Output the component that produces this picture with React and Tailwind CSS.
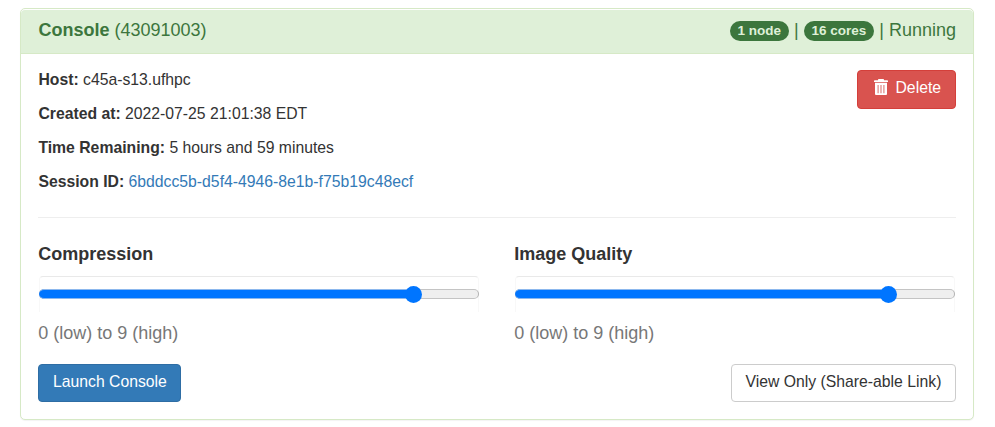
function Detail({ label, children }) {
  return (
    <p className="h-[34px] whitespace-nowrap">
      <strong>{label}</strong> {children}
    </p>
  );
}

function Badge({ children }) {
  return (
    <span className="mt-px flex h-5 items-center rounded-full bg-[#3c763d] px-[7.9px] text-[13.5px] leading-5 font-bold text-[#dff0d8]">
      {children}
    </span>
  );
}

function TrashIcon() {
  return (
    <svg width="16" height="17" viewBox="0 0 16 17" fill="none" aria-hidden="true">
      <path d="M5 1.2V.7Q5 0 5.8 0h4.4q.8 0 .8.7v.5h3.2q.8 0 .8.7V3H1V1.9q0-.7.8-.7z" fill="#fff" />
      <path d="M2 3.8h12V15q0 1-1 1H3q-1 0-1-1z" fill="#fff" />
      <path d="M5.1 6v8.3M8 6v8.3M10.9 6v8.3" stroke="#df8582" strokeWidth="1.2" />
    </svg>
  );
}

function Slider({ title, thumb }) {
  return (
    <div className="flex w-[442px] flex-col">
      <h4 className="h-[32px] pl-[0.2px] text-[18px] leading-5 font-bold">{title}</h4>
      <div className="mx-px h-[36px] rounded-t-[4px] border border-b-0 border-x-[#f8f8f8] border-t-[#e9e9e9] pt-3">
        <div className="relative -mx-px h-[10px] rounded-full border border-[#b2b2b2] border-y-[#c4c4c4] bg-[#efefef]">
          <div className="absolute -top-px -left-px h-[10px] w-[376px] rounded-l-full border-y border-[#8cb8ee] bg-[#0075ff]" />
          <div
            className="absolute top-[-4.5px] h-[17px] w-[17px] rounded-full bg-[#0075ff]"
            style={{ left: `${thumb}px` }}
          />
        </div>
      </div>
      <p className="mt-[11px] pl-[0.2px] text-[18px] leading-5 text-[#777]">0 (low) to 9 (high)</p>
    </div>
  );
}

export default function App() {
  return (
    <div className="h-[427px] w-[995px] overflow-hidden bg-white px-5 pt-2 font-['Liberation_Sans',Arial,sans-serif] text-[15.75px] leading-[22px] text-[#333]">
      <section className="h-[412px] w-[954px] rounded-[5px] border border-[#d6e9c6] bg-white pt-px shadow-[0_1px_1px_rgba(0,0,0,0.05)]">
        <header className="flex h-[44px] items-start justify-between rounded-t-[4px] border-b border-[#d6e9c6] bg-[#dff0d8] px-[17px] pt-[10px] text-[18px] leading-5 text-[#3c763d]">
          <h3 className="pl-[0.4px]">
            <strong>Console</strong> (43091003)
          </h3>
          <div className="flex items-start gap-[5px]">
            <Badge>1 node</Badge>
            <span>|</span>
            <Badge>16 cores</Badge>
            <span>| Running</span>
          </div>
        </header>
        <div className="px-[17px] pt-4">
          <div className="flex h-[147px] items-start justify-between">
            <div className="-mt-px pl-[0.4px]">
              <Detail label="Host:">c45a-s13.ufhpc</Detail>
              <Detail label="Created at:">2022-07-25 21:01:38 EDT</Detail>
              <Detail label="Time Remaining:">5 hours and 59 minutes</Detail>
              <Detail label="Session ID:">
                <a className="text-[#337ab7]">6bddcc5b-d5f4-4946-8e1b-f75b19c48ecf</a>
              </Detail>
            </div>
            <button className="flex h-[39px] w-[99px] items-start gap-[6.5px] rounded-[4px] border border-[#d43f3a] bg-[#d9534f] pt-[6px] pl-[15px] text-white">
              <span className="mt-[2px]"><TrashIcon /></span>
              Delete
            </button>
          </div>
          <hr className="border-[#eee]" />
          <div className="flex justify-between pt-[26px]">
            <Slider title="Compression" thumb={364.5} />
            <Slider title="Image Quality" thumb={363.5} />
          </div>
          <div className="flex justify-between pt-[21px]">
            <button className="h-[38px] w-[143px] rounded-[4px] border border-[#2e6da4] bg-[#337ab7] pb-[2px] pl-[0.8px] text-white">
              Launch Console
            </button>
            <button className="h-[38px] w-[225px] rounded-[4px] border border-[#ccc] bg-white pb-[2px] whitespace-nowrap">
              View Only (Share-able Link)
            </button>
          </div>
        </div>
      </section>
    </div>
  );
}
